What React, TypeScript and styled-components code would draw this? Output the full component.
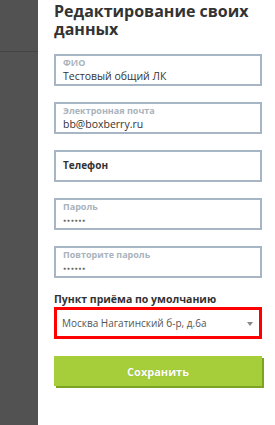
import React from 'react'
import styled, { createGlobalStyle } from 'styled-components'

const GlobalStyle = createGlobalStyle`
  html, body {
    margin: 0;
    padding: 0;
    background: #ffffff;
    font-family: 'Open Sans', 'Noto Sans', sans-serif;
  }
`

const Page = styled.div`
  display: flex;
  width: 275px;
  height: 425px;
  overflow: hidden;
`

const Sidebar = styled.aside`
  width: 38px;
  flex-shrink: 0;
  background: #525252;
  display: flex;
  flex-direction: column;
`

const SidebarTop = styled.div`
  height: 51px;
  border-bottom: 1px solid #444444;
`

const Main = styled.main`
  flex: 1;
  padding: 0 13px 0 16px;
  display: flex;
  flex-direction: column;
`

const Title = styled.h1`
  margin: 2px 0 0 0;
  font-size: 16px;
  line-height: 18px;
  font-weight: 700;
  color: #333333;
  white-space: nowrap;
`

const Fields = styled.div`
  display: flex;
  flex-direction: column;
  gap: 16px;
  margin-top: 16px;
`

const Field = styled.div<{ $centered?: boolean }>`
  box-sizing: border-box;
  height: 32px;
  border: 2px solid #a7b6c5;
  padding: ${props => props.$centered ? '0 7px 2px' : '1px 7px 0'};
  display: flex;
  flex-direction: column;
  justify-content: ${props => props.$centered ? 'center' : 'flex-start'};
`

const FieldLabel = styled.span`
  font-size: 9px;
  line-height: 12px;
  font-weight: 700;
  color: #a9b3bd;
`

const Placeholder = styled.span`
  font-size: 10px;
  line-height: 14px;
  font-weight: 700;
  color: #333333;
`

const FieldValue = styled.span`
  font-size: 10.5px;
  line-height: 15px;
  color: #333333;
`

const Dots = styled.span`
  font-size: 5px;
  line-height: 14px;
  color: #666666;
  letter-spacing: 0.8px;
`

const SelectLabel = styled.div`
  margin-top: 14px;
  font-size: 10.5px;
  line-height: 14px;
  font-weight: 700;
  color: #333333;
`

const Select = styled.div`
  box-sizing: border-box;
  height: 32px;
  margin-top: 1px;
  border: 3px solid #ff0000;
  padding: 0 6px 0 5px;
  display: flex;
  align-items: center;
  justify-content: space-between;
  font-size: 10px;
  color: #555555;
`

const Arrow = styled.span`
  width: 0;
  height: 0;
  border-left: 3.5px solid transparent;
  border-right: 3.5px solid transparent;
  border-top: 4px solid #888888;
  margin-top: 2px;
`

const SaveButton = styled.button`
  margin-top: 17px;
  width: 208px;
  height: 30px;
  border: none;
  background: #a6cd3a;
  box-shadow: 2px 2px 0 #7da324;
  color: #ffffff;
  font-family: 'Open Sans', sans-serif;
  font-size: 11px;
  font-weight: 700;
  text-shadow: 0 0 1px rgba(0, 0, 0, 0.15);
  padding: 0;
  cursor: pointer;
`

export default function App() {
  return (
    <>
      <GlobalStyle />
      <Page>
        <Sidebar>
          <SidebarTop />
        </Sidebar>
        <Main>
          <Title>
            Редактирование своих
            <br />
            данных
          </Title>
          <Fields>
            <Field>
              <FieldLabel>ФИО</FieldLabel>
              <FieldValue>Тестовый общий ЛК</FieldValue>
            </Field>
            <Field>
              <FieldLabel>Электронная почта</FieldLabel>
              <FieldValue>bb@boxberry.ru</FieldValue>
            </Field>
            <Field $centered>
              <Placeholder>Телефон</Placeholder>
            </Field>
            <Field>
              <FieldLabel>Пароль</FieldLabel>
              <Dots>●●●●●●</Dots>
            </Field>
            <Field>
              <FieldLabel>Повторите пароль</FieldLabel>
              <Dots>●●●●●●</Dots>
            </Field>
          </Fields>
          <SelectLabel>Пункт приёма по умолчанию</SelectLabel>
          <Select>
            <span>Москва Нагатинский б-р, д.6а</span>
            <Arrow />
          </Select>
          <SaveButton>Сохранить</SaveButton>
        </Main>
      </Page>
    </>
  )
}
